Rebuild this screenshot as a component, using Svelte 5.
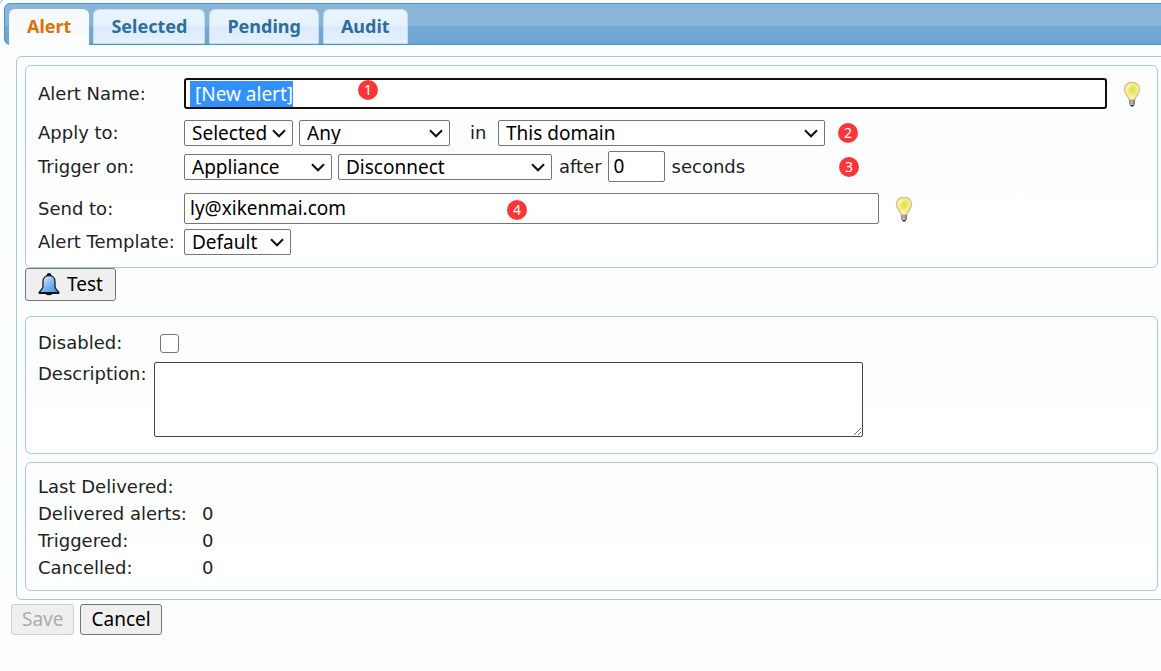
<script>
  import { onMount } from 'svelte';

  const tabs = ['Alert', 'Selected', 'Pending', 'Audit'];
  let active = $state('Alert');
  let name = $state(' [New alert]');
  let sendTo = $state('ly@xikenmai.com');
  let seconds = $state('0');
  let disabled = $state(false);
  let description = $state('');
  let nameInput;

  const stats = [
    ['Last Delivered:', ''],
    ['Delivered alerts:', '0'],
    ['Triggered:', '0'],
    ['Cancelled:', '0']
  ];

  onMount(() => {
    nameInput.focus();
    nameInput.select();
  });
</script>

{#snippet bulb()}
  <svg class="bulb" viewBox="0 0 18 26" aria-hidden="true">
    <defs>
      <radialGradient id="glass" cx="52%" cy="42%" r="58%">
        <stop offset="0" stop-color="#dfe04e" />
        <stop offset="0.5" stop-color="#eeee78" />
        <stop offset="0.85" stop-color="#f8f4ac" />
        <stop offset="1" stop-color="#fdf3d6" />
      </radialGradient>
      <linearGradient id="cap" x1="0" x2="1">
        <stop offset="0" stop-color="#8d8d8d" />
        <stop offset="0.45" stop-color="#d2d2d2" />
        <stop offset="1" stop-color="#666" />
      </linearGradient>
    </defs>
    <path d="M6.200 18.800C6 15.500 1.400 13 1.400 8.500C1.400 4 4.500 1.300 9 1.300S16.600 4 16.600 8.500C16.600 13 12 15.500 11.800 18.800Z" fill="url(#glass)" stroke="#deb98a" stroke-width="1.300" />
    <path d="M4 7.500C4.500 4.500 7 3.500 9.500 3.600C7.500 4.800 6 6 5 8.500Z" fill="#fffde2" opacity=".8" />
    <path d="M6 18.800H12V23L10.500 25.300H7.500L6 23Z" fill="url(#cap)" />
    <path d="M6 20.300L12 19.700M6 22.300L12 21.700" stroke="#858585" stroke-width=".7" />
    <path d="M7 24H11L10 25.600H8Z" fill="#333" />
  </svg>
{/snippet}

{#snippet choice(id, label, size, options)}
  <span class="choice {size}">
    <select {id} aria-label={label}>
      {#each options as option}<option>{option}</option>{/each}
    </select>
    <svg viewBox="0 0 14 9" aria-hidden="true"><path d="M1 1.300L7 7.300L13 1.300" fill="none" stroke="#111" stroke-width="2" /></svg>
  </span>
{/snippet}

<div class="widget">
  <div class="tabs" role="tablist">
    {#each tabs as tab}
      <button type="button" role="tab" class:active={active === tab} aria-selected={active === tab} onclick={() => (active = tab)}>{tab}</button>
    {/each}
  </div>

  <form onsubmit={(e) => e.preventDefault()}>
    <div class="panel">
      <section class="group rule">
        <div class="row name">
          <label for="name">Alert Name:</label>
          <input id="name" class="grow focused" type="text" autocomplete="off" spellcheck="false" bind:this={nameInput} bind:value={name} />
          {@render bulb()}
          <span class="badge b1">1</span>
        </div>
        <div class="row apply">
          <label for="scope">Apply to:</label>
          {@render choice('scope', 'Apply to', 'w-scope', ['Selected', 'All'])}
          {@render choice('kind', 'Kind', 'w-kind', ['Any', 'All'])}
          <span class="in">in</span>
          {@render choice('domain', 'Domain', 'w-domain', ['This domain', 'All domains'])}
          <span class="badge b2">2</span>
        </div>
        <div class="row">
          <label for="source">Trigger on:</label>
          {@render choice('source', 'Trigger on', 'w-source', ['Appliance', 'Device'])}
          {@render choice('event', 'Event', 'w-event', ['Disconnect', 'Connect'])}
          <label class="after" for="seconds">after</label>
          <input id="seconds" class="seconds" type="text" bind:value={seconds} />
          <span>seconds</span>
          <span class="badge b3">3</span>
        </div>
        <div class="row send">
          <label for="send">Send to:</label>
          <input id="send" class="address" type="text" spellcheck="false" bind:value={sendTo} />
          {@render bulb()}
          <span class="badge b4">4</span>
        </div>
        <div class="row template">
          <label for="template">Alert Template:</label>
          {@render choice('template', 'Alert Template', 'w-template', ['Default', 'Short'])}
        </div>
      </section>

      <button type="button" class="push test">
        <svg viewBox="0 0 22 24" aria-hidden="true">
          <defs>
            <linearGradient id="bell" x1="0" y1="0" x2="1" y2="1">
              <stop offset="0.1" stop-color="#e4f1ff" />
              <stop offset="0.5" stop-color="#80b9f2" />
              <stop offset="1" stop-color="#3484dd" />
            </linearGradient>
          </defs>
          <path d="M8.800 4.500V2.500Q9 1 11 1T13.200 2.500V4.500ZM7.500 21H14.500V22Q13.500 23.300 11 23.300T7.500 22Z" fill="#111" />
          <path d="M11 3.500C7.500 3.500 5 6 5 9.500V14C5 16 4 17.500 1.300 20V21.300H20.700V20C18 17.500 17 16 17 14V9.500C17 6 14.500 3.500 11 3.500Z" fill="url(#bell)" stroke="#151a22" stroke-width="1.300" />
          <path d="M1 20.900H21" stroke="#111" stroke-width="1.800" />
        </svg>
        <span>Test</span>
      </button>

      <section class="group notes">
        <div class="row">
          <label for="disabled">Disabled:</label>
          <input id="disabled" type="checkbox" bind:checked={disabled} />
        </div>
        <div class="row top">
          <label for="description">Description:</label>
          <textarea id="description" bind:value={description}></textarea>
        </div>
      </section>

      <section class="group stats">
        <dl>
          {#each stats as [term, value]}
            <dt>{term}</dt>
            <dd>{value}</dd>
          {/each}
        </dl>
      </section>
    </div>

    <div class="actions">
      <button type="submit" class="push" disabled>Save</button>
      <button type="button" class="push">Cancel</button>
    </div>
  </form>
</div>

<style>
  :global(body) {
    background: #fcfdfd;
    overflow-x: hidden;
  }

  * {
    box-sizing: border-box;
  }

  .widget {
    width: calc(100% + 8px);
    min-height: calc(100vh + 1px);
    margin: -1px 0 0 -1px;
    padding: 3px 1px 0 4px;
    border: solid #a6c9e2;
    border-width: 1px 0 0 1px;
    border-radius: 6px 0 0 0;
    color: #222;
    font: 18px/26px "DejaVu Sans", Verdana, sans-serif;
  }

  button,
  input,
  select,
  textarea {
    margin: 0;
    font: 19px/22px "Noto Sans", "Lucida Sans", sans-serif;
    color: #000;
  }

  .tabs {
    display: flex;
    align-items: flex-end;
    gap: 4px;
    height: 42px;
    padding-left: 4px;
    border: 1px solid #4297d7;
    border-radius: 6px;
    background: linear-gradient(#8ab6da 0, #87b4d8 22px, #73a9d3 22px, #6ea4cf 100%);
  }

  .tabs button {
    height: 35px;
    padding: 0 17px 1px;
    border: 1px solid #c5dbec;
    border-radius: 6px 6px 0 0;
    background: linear-gradient(#eaf4fe 0, #e5f1fc 16px, #dbebfb 17px, #e4f1fd 100%);
    color: #2e6e9e;
    font-size: 18px;
    font-weight: 700;
  }

  .tabs button.active {
    height: 36px;
    margin-bottom: -1px;
    padding-bottom: 3px;
    border-color: #f5f8f9;
    border-bottom: 0;
    background: linear-gradient(#f5f8f9, #fcfdfd);
    color: #e17009;
  }

  .panel {
    margin: 11px 0 0 12px;
    padding: 8px;
    border: 1px solid #a6c9e2;
    border-radius: 6px;
  }

  .group {
    border: 1px solid #a6c9e2;
    border-radius: 6px;
    background: linear-gradient(#fcfdfd, #fff);
  }

  .rule {
    padding: 12px 16px 12px 12px;
  }

  .row {
    position: relative;
    display: flex;
    align-items: center;
  }

  .rule .row > label:first-child {
    flex: none;
    width: 146px;
  }

  .name {
    margin-bottom: 11px;
  }

  .apply {
    margin-bottom: 5px;
  }

  .send {
    margin: 11px 0 5px;
  }

  input[type='text'] {
    height: 31px;
    padding: 0 5px 1px;
    border: 1px solid #767676;
    border-radius: 2px;
    background: #fff;
    outline: 0;
  }

  input[type='text'].focused {
    padding: 0 4px;
    border: 2px solid #101010;
    border-radius: 3px;
  }

  input::selection {
    background: #3390ff;
    color: #fff;
  }

  .grow {
    flex: 1;
    min-width: 0;
  }

  .address {
    width: 695px;
  }

  .seconds {
    width: 57px;
    margin: 0 7px 0 6px;
  }

  .after {
    margin-left: 7px;
  }

  .bulb {
    flex: none;
    width: 18px;
    height: 26px;
    margin-left: 16px;
  }

  .choice {
    position: relative;
    display: flex;
    flex: none;
  }

  .choice + .choice {
    margin-left: 6px;
  }

  .choice select {
    appearance: none;
    width: 100%;
    height: 26px;
    padding: 0 7px;
    border: 1px solid #767676;
    border-radius: 2px;
    background: #fff;
  }

  .choice svg {
    position: absolute;
    top: 9px;
    right: 7px;
    width: 14px;
    height: 9px;
    pointer-events: none;
  }

  .w-scope { width: 109px; }
  .w-kind { width: 151px; }
  .w-domain { width: 327px; }
  .w-source { width: 148px; }
  .w-event { width: 214px; }
  .w-template { width: 107px; }

  .in {
    width: 48px;
    padding-left: 20px;
  }

  .badge {
    position: absolute;
    width: 20px;
    height: 20px;
    border-radius: 50%;
    background: #fc3636;
    color: #fff;
    font: 14px/20px "Noto Sans", sans-serif;
    text-align: center;
  }

  .b1 { left: 320px; top: 2px; }
  .b2 { left: 800px; top: 3px; }
  .b3 { left: 801px; top: 6px; }
  .b4 { left: 469px; top: 7px; }

  .push {
    display: flex;
    align-items: center;
    height: 31px;
    padding: 0 10px 1px;
    border: 1px solid #767676;
    border-radius: 3px;
    background: #efefef;
  }

  .push:disabled {
    border-color: #cfcfcf;
    color: #acacac;
  }

  .test {
    height: 33px;
    padding: 0 12px 1px;
    gap: 7px;
  }

  .test svg {
    width: 22px;
    height: 24px;
  }

  .notes {
    margin: 15px 0 8px;
    padding: 13px 12px 16px;
  }

  .notes label {
    width: 116px;
  }

  input[type='checkbox'] {
    appearance: none;
    width: 19px;
    height: 19px;
    margin-left: 6px;
    border: 1px solid #767676;
    border-radius: 3px;
    background: #fff;
  }

  input[type='checkbox']:checked {
    background: #0075ff;
  }

  .top {
    align-items: flex-start;
    margin-top: 6px;
    line-height: 24px;
  }

  textarea {
    width: 709px;
    height: 75px;
    border: 1px solid #444;
    border-radius: 2px;
    background: #fff;
  }

  .stats {
    padding: 10px 12px 9px;
  }

  dl {
    display: grid;
    grid-template-columns: 164px 1fr;
    grid-auto-rows: 27px;
    margin: 0;
    line-height: 28px;
  }

  dd {
    margin: 0;
  }

  .actions {
    display: flex;
    gap: 6px;
    padding: 4px 0 0 7px;
  }
</style>
